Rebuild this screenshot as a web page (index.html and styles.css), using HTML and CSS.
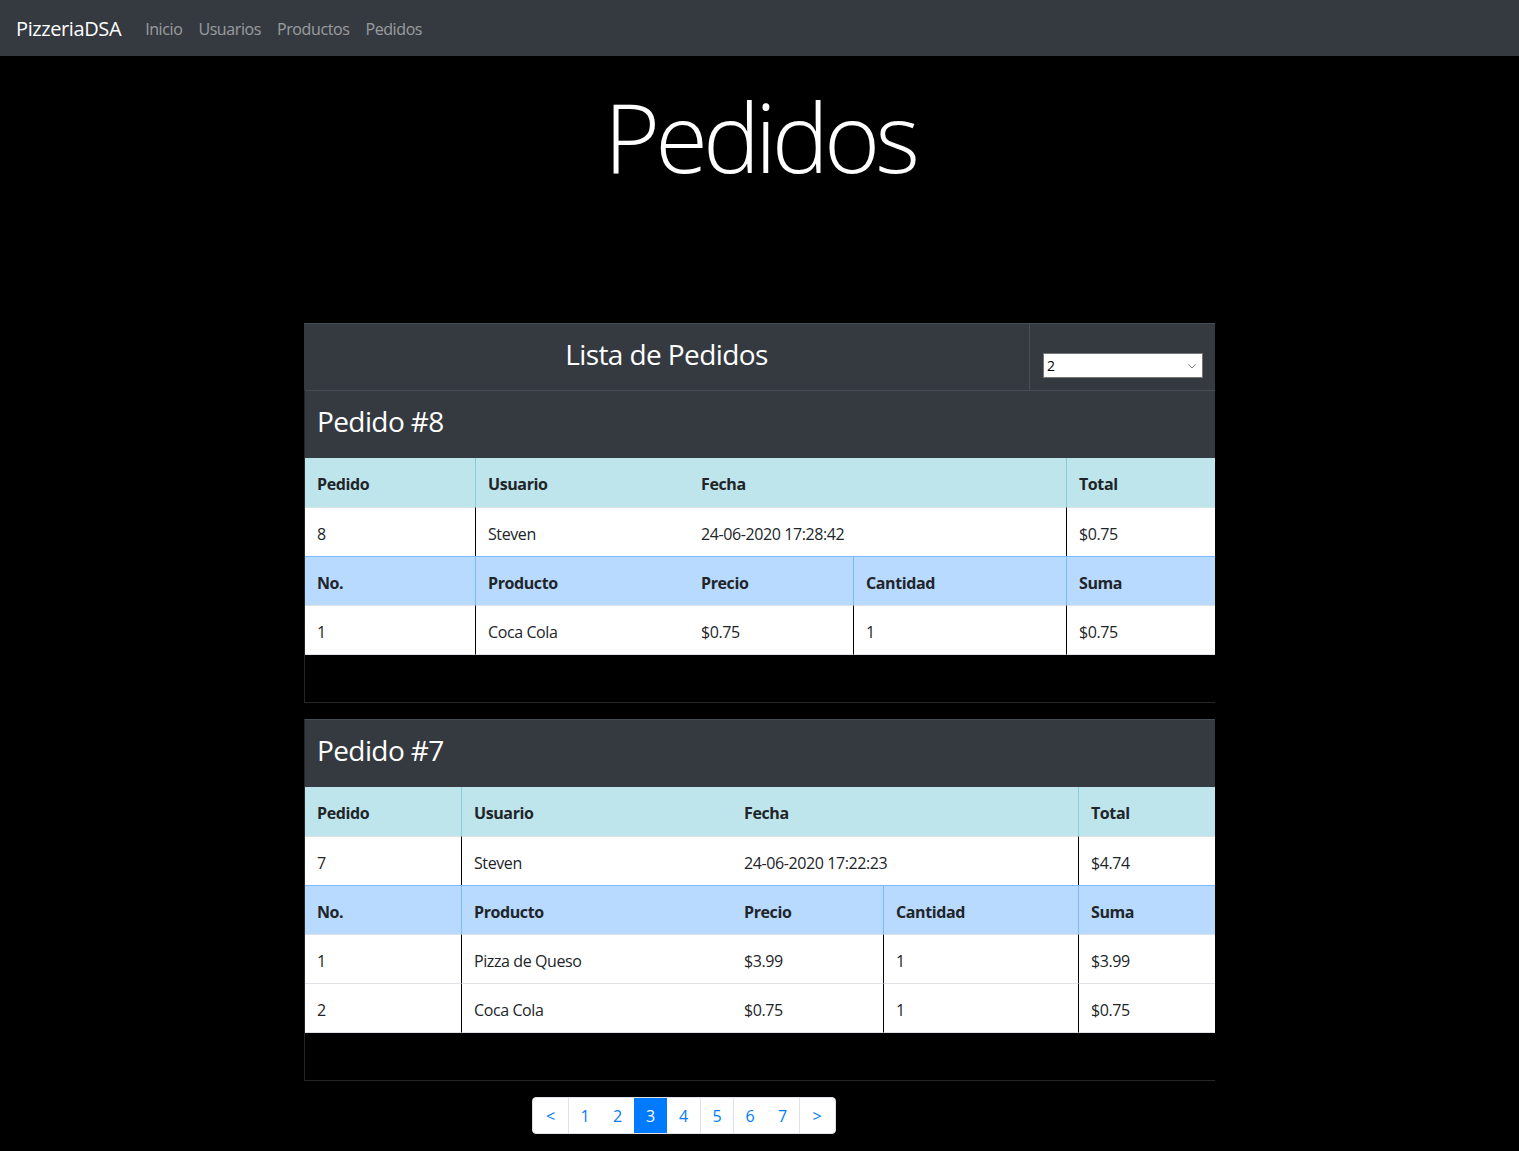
FILE: index.html
```html
<!DOCTYPE html>
<html lang="es">
<head>
<meta charset="utf-8">
<title>PizzeriaDSA - Pedidos</title>
<link rel="stylesheet" href="styles.css">
</head>
<body>
<nav class="navbar">
  <a class="brand" href="#">PizzeriaDSA</a>
  <a class="nav-link" href="#">Inicio</a>
  <a class="nav-link" href="#">Usuarios</a>
  <a class="nav-link" href="#">Productos</a>
  <a class="nav-link" href="#">Pedidos</a>
</nav>

<header class="hero">
  <h1 class="display">Pedidos</h1>
</header>

<main class="container">
  <div class="list-head">
    <div class="list-title"><h3>Lista de Pedidos</h3></div>
    <div class="list-select">
      <div class="select">
        <span>2</span>
        <svg width="8" height="5" viewBox="0 0 8 5"><path d="M0.5 0.5 L4 4 L7.5 0.5" fill="none" stroke="#777" stroke-width="1"/></svg>
      </div>
    </div>
  </div>

  <section class="pedido first">
    <div class="pedido-head"><h3>Pedido #8</h3></div>
    <table class="tbl">
      <colgroup><col style="width:170px"><col style="width:214px"><col style="width:164px"><col style="width:213px"><col style="width:149px"></colgroup>
      <tr class="row-info">
        <th>Pedido</th><th class="bl">Usuario</th><th colspan="2">Fecha</th><th class="bl">Total</th>
      </tr>
      <tr class="row-data">
        <td>8</td><td class="bl">Steven</td><td colspan="2">24-06-2020 17:28:42</td><td class="bl">$0.75</td>
      </tr>
      <tr class="row-prod">
        <th>No.</th><th class="bl">Producto</th><th>Precio</th><th class="bl">Cantidad</th><th class="bl">Suma</th>
      </tr>
      <tr class="row-data last">
        <td>1</td><td class="bl">Coca Cola</td><td>$0.75</td><td class="bl">1</td><td class="bl">$0.75</td>
      </tr>
    </table>
    <div class="spacer"></div>
  </section>

  <section class="pedido">
    <div class="pedido-head"><h3>Pedido #7</h3></div>
    <table class="tbl">
      <colgroup><col style="width:156px"><col style="width:271px"><col style="width:151px"><col style="width:195px"><col style="width:137px"></colgroup>
      <tr class="row-info">
        <th>Pedido</th><th class="bl">Usuario</th><th colspan="2">Fecha</th><th class="bl">Total</th>
      </tr>
      <tr class="row-data">
        <td>7</td><td class="bl">Steven</td><td colspan="2">24-06-2020 17:22:23</td><td class="bl">$4.74</td>
      </tr>
      <tr class="row-prod">
        <th>No.</th><th class="bl">Producto</th><th>Precio</th><th class="bl">Cantidad</th><th class="bl">Suma</th>
      </tr>
      <tr class="row-data">
        <td>1</td><td class="bl">Pizza de Queso</td><td>$3.99</td><td class="bl">1</td><td class="bl">$3.99</td>
      </tr>
      <tr class="row-data last">
        <td>2</td><td class="bl">Coca Cola</td><td>$0.75</td><td class="bl">1</td><td class="bl">$0.75</td>
      </tr>
    </table>
    <div class="spacer"></div>
  </section>

  <ul class="pagination">
    <li class="page edge"><a href="#">&lt;</a></li>
    <li class="page sep"><a href="#">1</a></li>
    <li class="page"><a href="#">2</a></li>
    <li class="page active"><a href="#">3</a></li>
    <li class="page"><a href="#">4</a></li>
    <li class="page sep"><a href="#">5</a></li>
    <li class="page sep"><a href="#">6</a></li>
    <li class="page"><a href="#">7</a></li>
    <li class="page edge sep last"><a href="#">&gt;</a></li>
  </ul>
</main>
</body>
</html>
```

FILE: styles.css
```css
* { box-sizing: border-box; }
html, body { margin: 0; padding: 0; }
body {
  background: #000;
  color: #212529;
  font-family: "Segoe UI", "Open Sans", "Noto Sans", "Liberation Sans", sans-serif;
  font-size: 16px;
  line-height: 24px;
}
a { text-decoration: none; }

.navbar {
  height: 56px;
  background: #343a40;
  display: flex;
  align-items: center;
  padding: 2px 16px 0;
}
.brand {
  color: #fff;
  font-size: 20px;
  line-height: 30px;
  margin-right: 16px;
  letter-spacing: -0.4px;
}
.nav-link {
  color: rgba(255,255,255,.5);
  padding: 8px;
  letter-spacing: -0.4px;
}

.hero {
  height: 267px;
  padding-top: 22px;
  text-align: center;
}
.display {
  margin: 0;
  font-size: 96px;
  line-height: 115px;
  font-weight: 300;
  color: #fff;
  letter-spacing: -5px;
}

.container {
  width: 911px;
  margin: 0 auto;
}

h3 {
  margin: 0;
  font-size: 28px;
  line-height: 34px;
  font-weight: 400;
  color: #fff;
  letter-spacing: -0.6px;
}

.list-head {
  display: flex;
  background: #343a40;
  border-top: 1px solid #454d55;
  height: 67px;
}
.list-title {
  width: 725px;
  padding: 13px 12px 0;
  text-align: center;
}
.list-select {
  flex: 1;
  border-left: 1px solid #454d55;
  padding: 29px 12px 0 13px;
}
.select {
  width: 160px;
  height: 25px;
  background: #fff;
  border: 1px solid #767676;
  display: flex;
  align-items: center;
  justify-content: space-between;
  padding: 1px 6px 0 3px;
  font-size: 14px;
  color: #000;
}

.pedido {
  border-left: 1px solid #262626;
  border-bottom: 1px solid #262626;
  margin-bottom: 16px;
}
.pedido-head {
  background: #343a40;
  border-top: 1px solid #454d55;
  height: 68px;
  padding: 13px 12px 0;
}

.tbl {
  width: 100%;
  table-layout: fixed;
  border-collapse: separate;
  border-spacing: 0;
}
.tbl th, .tbl td {
  padding: 14px 12px 10px;
  text-align: left;
  vertical-align: top;
  line-height: 24px;
  white-space: nowrap;
  letter-spacing: -0.4px;
}
.tbl th { font-weight: 700; color: #212529; }
.row-info th { background: #bee5eb; height: 49px; }
.row-info th.bl { border-left: 1px solid #86cfda; }
.row-data td {
  background: #fff;
  border-top: 1px solid #dee2e6;
  height: 49px;
}
.row-data td.bl { border-left: 1px solid #000; }
.row-data.last td { border-bottom: 1px solid #dee2e6; height: 49px; }
.row-prod th {
  background: #b8daff;
  border-top: 1px solid #7abaff;
  height: 49px;
}
.row-prod th.bl { border-left: 1px solid #7abaff; }

.spacer { height: 47px; }

.pagination {
  list-style: none;
  margin: 0 0 0 228px;
  padding: 0;
  display: flex;
  width: 304px;
  height: 37px;
  background: #fff;
  border: 1px solid #dee2e6;
  border-radius: 4px;
}
.page a {
  display: block;
  width: 33px;
  height: 35px;
  line-height: 37px;
  text-align: center;
  color: #007bff;
  font-size: 16px;
}
.page.sep a { border-left: 1px solid #dee2e6; }
.page.edge a { width: 35px; }
.page.active a {
  background: #007bff;
  color: #fff;
}
```
